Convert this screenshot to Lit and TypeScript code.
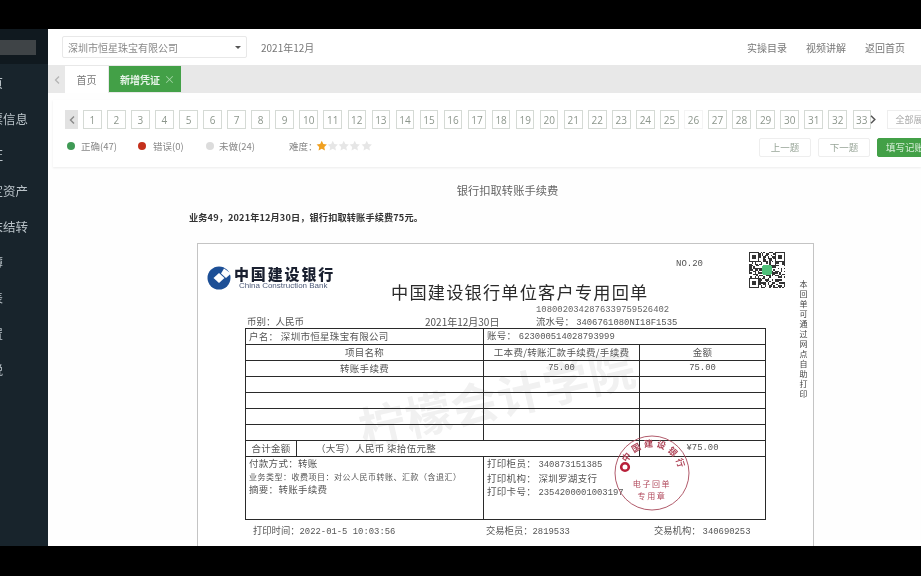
import { LitElement, html, css } from "lit";
import { customElement } from "lit/decorators.js";

const nav = ["首页", "发票信息", "凭证", "固定资产", "期末结转", "账簿", "报表", "设置", "报税"];
const nums = Array.from({ length: 33 }, (_, i) => i + 1);

function qrPath() {
  const n = 25;
  let seed = 73;
  let d = "";
  const finder = (x: number, y: number) => x < 7 && y < 7 || x >= n - 7 && y < 7 || x < 7 && y >= n - 7;
  for (let y = 0; y < n; y++) {
    for (let x = 0; x < n; x++) {
      seed = (seed * 137 + 59) % 1009;
      let on = seed % 2 === 0;
      if (finder(x, y)) {
        const fx = x < 7 ? x : x - (n - 7);
        const fy = y < 7 ? y : y - (n - 7);
        on = fx === 0 || fx === 6 || fy === 0 || fy === 6 || (fx >= 2 && fx <= 4 && fy >= 2 && fy <= 4);
      }
      if (on) d += `M${x} ${y}h1v1h-1z`;
    }
  }
  return d;
}

const star = (fill: string) => html`<svg class="star" viewBox="0 0 24 24"><path fill=${fill} d="M12 1.5l3.3 6.9 7.5 1-5.5 5.2 1.4 7.5L12 18.4l-6.7 3.7 1.4-7.5L1.2 9.4l7.5-1z"/></svg>`;

@customElement("app-root")
export class AppRoot extends LitElement {
  static styles = css`
    :host { display: block; width: 921px; height: 576px; background: #000; overflow: hidden;
      font-family: "Noto Sans CJK SC", "Open Sans", sans-serif; color: #666; }
    .frame { display: flex; flex-direction: column; height: 576px; padding: 29px 0 30px; box-sizing: border-box; filter: blur(0.4px); }
    .app { flex: 1; display: flex; min-height: 0; background: #fff; overflow: hidden; }

    .side { width: 48px; flex: none; background: #18242c; overflow: hidden; color: #b9c2c8; font-size: 12.5px; }
    .brand { height: 35px; background: #10191f; display: flex; align-items: center; }
    .brand i { display: block; width: 36px; height: 15px; background: #3f4447; margin-top: 1px; }
    .side ul { list-style: none; margin: 0; padding: 1px 0 0; }
    .side li { height: 35.9px; line-height: 36px; white-space: nowrap; margin-left: -22px; }

    .main { flex: 1; min-width: 0; display: flex; flex-direction: column; overflow: hidden; background: #fefefe; }
    .bar { height: 36px; flex: none; display: flex; align-items: center; padding: 0 16px 0 14px; background: #fff; font-size: 10px; color: #777; }
    .select { width: 185px; height: 22px; box-sizing: border-box; border: 1px solid #e8e8e8; border-radius: 2px; display: flex; align-items: center; justify-content: space-between; padding: 0 5px 0 5px; color: #888; }
    .caret { width: 0; height: 0; border: 3px solid transparent; border-top: 3.5px solid #555; border-bottom: 0; }
    .period { margin-left: 14px; flex: 1; color: #777; }
    .links { display: flex; gap: 19px; color: #777; }

    .tabs { height: 28px; flex: none; background: #e8e8e8; display: flex; align-items: stretch; font-size: 10px; padding-top: 1px; box-sizing: border-box; }
    .back { width: 17px; display: flex; align-items: center; justify-content: center; }
    .back svg { width: 6px; height: 8px; }
    .tab { background: #fff; width: 43px; display: flex; align-items: center; justify-content: center; color: #777; }
    .tab.on { background: #43a047; color: #e9f5ea; width: 72px; margin-left: 1px; margin-bottom: 1px; font-weight: 700; gap: 4px; justify-content: flex-start; padding-left: 11px; box-sizing: border-box; }
    .tab.on span { font-weight: 400; color: #a5d6a7; font-size: 11px; }

    .panel { flex: none; margin: 7px 0 0 5px; height: 67px; background: #fff; box-shadow: 0 1px 2px #ececec; padding: 10px 0 0 12px; box-sizing: border-box; }
    .pager { display: flex; align-items: center; height: 19px; white-space: nowrap; }
    .pg { width: 18.6px; height: 18.5px; box-sizing: border-box; border: 1px solid #d5dad5; display: flex; align-items: center; justify-content: center; margin-right: 5.46px; font: 10px "Open Sans", sans-serif; color: #8c968c; flex: none; }
    .pg.faint { border-color: #f4f4f4; }
    .prev { width: 13px; height: 18.5px; background: #e2e2e2; display: flex; align-items: center; justify-content: center; margin-right: 5px; flex: none; }
    .prev svg { width: 6px; height: 8px; }
    .next { width: 10px; margin-left: -9px; display: flex; justify-content: center; flex: none; }
    .next svg { width: 6px; height: 9px; }
    .all { margin-left: 9px; flex: none; width: 50px; height: 18.5px; box-sizing: border-box; border: 1px solid #eee; font-size: 9px; color: #aaa; padding-left: 8px; line-height: 17px; overflow: hidden; }

    .status { display: flex; align-items: center; height: 20px; margin-top: 8px; padding-left: 2px; font-size: 9.5px; color: #888; width: 870px; }
    .lg { display: flex; align-items: center; flex: none; padding-bottom: 2px; }
    .lg i { width: 8px; height: 8px; border-radius: 50%; margin-right: 6px; }
    .lg.a { width: 71px; } .lg.a i { background: #3f9a55; }
    .lg.b { width: 68px; } .lg.b i { background: #c4301c; margin-right: 7px; }
    .lg.c { width: 83px; } .lg.c i { background: #dcdcdc; margin-right: 5px; }
    .diff { flex: 1; display: flex; align-items: center; padding-bottom: 2px; }
    .star { width: 11.5px; height: 11.5px; margin-right: -0.2px; }
    .star:first-of-type { margin-left: -2px; }
    .btn { width: 52px; height: 19px; box-sizing: border-box; border: 1px solid #eee; border-radius: 2px; display: flex; align-items: center; justify-content: center; color: #9aa79a; margin-left: 7px; flex: none; font-size: 9.5px; }
    .btn.go { background: #43a047; border-color: #43a047; color: #d8eed9; width: 60px; white-space: nowrap; justify-content: flex-start; padding-left: 8px; }

    .qtitle { flex: none; text-align: center; font-size: 11.3px; line-height: 16px; margin-top: 15px; color: #666; padding-left: 46px; }
    .qdesc { flex: none; margin: 12px 0 0 141px; font-size: 9.2px; line-height: 14px; font-weight: 700; color: #333; letter-spacing: .12px; }

    .receipt { position: relative; flex: none; width: 617px; height: 320px; box-sizing: border-box; margin: 19px 0 0 149px; border: 1px solid #c4c4c4; border-left-width: 1.5px; background: #fff; color: #555; }
    .rtop { display: flex; height: 71px; padding-top: 8px; box-sizing: border-box; }
    .logo { width: 184px; flex: none; margin-left: 9px; padding-top: 14px; display: flex; gap: 3px; }
    .logo svg { width: 24px; height: 24px; flex: none; }
    .bank { line-height: 1; }
    .bank b { display: block; font-size: 15px; letter-spacing: 1.85px; line-height: 15px; font-weight: 900; color: #1a2030; white-space: nowrap; }
    .bank small { display: block; font: 8px/9px "Liberation Sans", sans-serif; color: #4d5a78; white-space: nowrap; padding-left: 5px; }
    .mid { width: 358px; flex: none; }
    .no { padding: 2px 0 0 285px; font: 9px/20px "Liberation Mono", monospace; color: #555; }
    .title { font-size: 17.2px; line-height: 20px; letter-spacing: 1.2px; margin-top: 8px; color: #2a2a2a; white-space: nowrap; }
    .serial { padding: 2px 0 0 145px; font: 8.9px/12px "Liberation Mono", monospace; color: #666; }
    .qr { width: 36px; height: 36px; flex: none; }

    .meta { display: flex; height: 13px; line-height: 13px; padding-left: 49px; font-size: 9.5px; white-space: nowrap; }
    .meta > span:nth-child(1) { width: 178px; }
    .meta > span:nth-child(2) { width: 111px; font-size: 10px; }
    .mono { font-family: "Liberation Mono", "Noto Sans CJK SC", monospace; font-size: 8.9px; letter-spacing: 0; }

    table { position: relative; margin-left: 47px; width: 520px; table-layout: fixed; border-collapse: collapse; font-size: 9.5px; color: #555; letter-spacing: .3px; }
    td { border: 1px solid #2a2a2a; height: 15px; padding: 0; line-height: 13px; text-align: center; white-space: nowrap; overflow: hidden; }
    td.l { text-align: left; padding-left: 3px; }
    td.tall { vertical-align: top; padding: 0 0 0 3px; height: 62px; text-align: left; }
    .cap { padding-left: 16px; }
    .ln { display: block; line-height: 13px; }
    .ln.sm { font-size: 8px; letter-spacing: .5px; }
    .foot { display: flex; padding: 4px 0 0 55px; font-size: 9.3px; line-height: 12px; white-space: nowrap; }
    .foot > span:nth-child(1) { width: 233px; }
    .foot > span:nth-child(2) { width: 168px; }

    .wm { position: absolute; left: 158px; top: 127px; font-size: 46px; line-height: 50px; font-weight: 700; letter-spacing: 1px; color: #f1f1f1; transform: rotate(-13deg); white-space: nowrap; }
    .stamp { position: absolute; left: 414px; top: 189px; width: 80px; height: 80px; }
    .stamp text { font-family: "Noto Sans CJK SC", sans-serif; fill: #b0475a; }
    .vert { position: absolute; left: 601px; top: 35px; width: 9px; font-size: 8px; line-height: 10px; color: #444; text-align: center; }
  `;

  render() {
    return html`<div class="frame"><div class="app">
      <aside class="side">
        <div class="brand"><i></i></div>
        <ul>${nav.map((n) => html`<li>${n}</li>`)}</ul>
      </aside>
      <main class="main">
        <header class="bar">
          <div class="select"><span>深圳市恒星珠宝有限公司</span><i class="caret"></i></div>
          <div class="period">2021年12月</div>
          <div class="links"><span>实操目录</span><span>视频讲解</span><span>返回首页</span></div>
        </header>
        <nav class="tabs">
          <div class="back"><svg viewBox="0 0 6 8"><path d="M5 .5L1.5 4 5 7.5" fill="none" stroke="#b5b5b5" stroke-width="1.3"/></svg></div>
          <div class="tab">首页</div>
          <div class="tab on">新增凭证<span>×</span></div>
        </nav>
        <section class="panel">
          <div class="pager">
            <div class="prev"><svg viewBox="0 0 6 8"><path d="M5 .5L1.5 4 5 7.5" fill="none" stroke="#888" stroke-width="1.4"/></svg></div>
            ${nums.map((n) => html`<div class="pg ${n === 26 ? "faint" : ""}">${n}</div>`)}
            <div class="next"><svg viewBox="0 0 6 9"><path d="M1 .8L4.8 4.5 1 8.2" fill="none" stroke="#555" stroke-width="1.5"/></svg></div>
            <div class="all">全部展开</div>
          </div>
          <div class="status">
            <div class="lg a"><i></i>正确(47)</div>
            <div class="lg b"><i></i>错误(0)</div>
            <div class="lg c"><i></i>未做(24)</div>
            <div class="diff">难度&#xFF1A;${star("#f0a020")}${star("#e6e6e6")}${star("#e6e6e6")}${star("#e6e6e6")}${star("#e6e6e6")}</div>
            <div class="btn">上一题</div>
            <div class="btn">下一题</div>
            <div class="btn go">填写记账凭证</div>
          </div>
        </section>
        <div class="qtitle">银行扣取转账手续费</div>
        <div class="qdesc">业务49&#xFF0C;2021年12月30日&#xFF0C;银行扣取转账手续费75元&#x3002;</div>
        <article class="receipt">
          <div class="wm">柠檬会计学院</div>
          <div class="rtop">
            <div class="logo">
              <svg viewBox="0 0 24 24"><circle cx="12" cy="12" r="11.5" fill="#1d4f96"/><path d="M12 7l5.5 5-5.5 5-5.5-5z" fill="#fff"/><path d="M17 2.5l7 5-5 4.5-5-4.5z" fill="#fff"/></svg>
              <div class="bank"><b>中国建设银行</b><small>China Construction Bank</small></div>
            </div>
            <div class="mid">
              <div class="no">NO.20</div>
              <div class="title">中国建设银行单位客户专用回单</div>
              <div class="serial">1080020342876339759526402</div>
            </div>
            <svg class="qr" viewBox="0 0 25 25" shape-rendering="crispEdges">
              <path d=${qrPath()} fill="#333"/>
              <rect x="9" y="9" width="7" height="7" rx="2" fill="#4fc07a"/>
            </svg>
          </div>
          <div class="meta">
            <span>币别&#xFF1A;人民币</span>
            <span>2021年12月30日</span>
            <span>流水号&#xFF1A; <span class="mono">3406761080NI18F1535</span></span>
          </div>
          <table>
            <colgroup><col style="width:51px"/><col style="width:187px"/><col style="width:156px"/><col style="width:126px"/></colgroup>
            <tr><td class="l" colspan="2">户名&#xFF1A; 深圳市恒星珠宝有限公司</td><td class="l" colspan="2">账号&#xFF1A; <span class="mono">623000514028793999</span></td></tr>
            <tr><td colspan="2">项目名称</td><td>工本费/转账汇款手续费/手续费</td><td>金额</td></tr>
            <tr><td colspan="2">转账手续费</td><td class="mono">75.00</td><td class="mono">75.00</td></tr>
            <tr><td colspan="2"></td><td></td><td></td></tr>
            <tr><td colspan="2"></td><td></td><td></td></tr>
            <tr><td colspan="2"></td><td></td><td></td></tr>
            <tr><td colspan="2"></td><td></td><td></td></tr>
            <tr><td>合计金额</td><td class="l" colspan="2"><span class="cap">&#xFF08;大写&#xFF09;人民币 柒拾伍元整</span></td><td class="mono">¥75.00</td></tr>
            <tr>
              <td class="tall" colspan="2"><span class="ln">付款方式&#xFF1A;转账</span><span class="ln sm">业务类型&#xFF1A;收费项目&#xFF1A;对公人民币转账&#x3001;汇款&#xFF08;含退汇&#xFF09;</span><span class="ln">摘要&#xFF1A;转账手续费</span></td>
              <td class="tall" colspan="2"><span class="ln">打印柜员&#xFF1A; <span class="mono">340873151385</span></span><span class="ln">打印机构&#xFF1A; 深圳罗湖支行</span><span class="ln">打印卡号&#xFF1A; <span class="mono">2354200001003197</span></span></td>
            </tr>
          </table>
          <div class="foot">
            <span>打印时间&#xFF1A;<span class="mono">2022-01-5 10:03:56</span></span>
            <span>交易柜员&#xFF1A;<span class="mono">2819533</span></span>
            <span>交易机构&#xFF1A; <span class="mono">340690253</span></span>
          </div>
          <svg class="stamp" viewBox="0 0 80 80">
            <circle cx="40" cy="40" r="37" fill="none" stroke="#a8485a" stroke-width=".9"/>
            <defs><path id="arc" d="M14 48A27 27 0 1 1 66 48"/></defs>
            <text font-size="9" font-weight="700" letter-spacing="2.8" text-anchor="middle"><textPath href="#arc" startOffset="54%">中国建设银行</textPath></text>
            <circle cx="13" cy="34" r="3.8" fill="none" stroke="#b8203a" stroke-width="2.6"/>
            <text x="40" y="54" font-size="8" letter-spacing="1.6" text-anchor="middle">电子回单</text>
            <text x="40" y="66" font-size="8" letter-spacing="1.6" text-anchor="middle">专用章</text>
          </svg>
          <div class="vert">本回单可通过网点自助打印</div>
        </article>
      </main>
    </div></div>`;
  }
}
